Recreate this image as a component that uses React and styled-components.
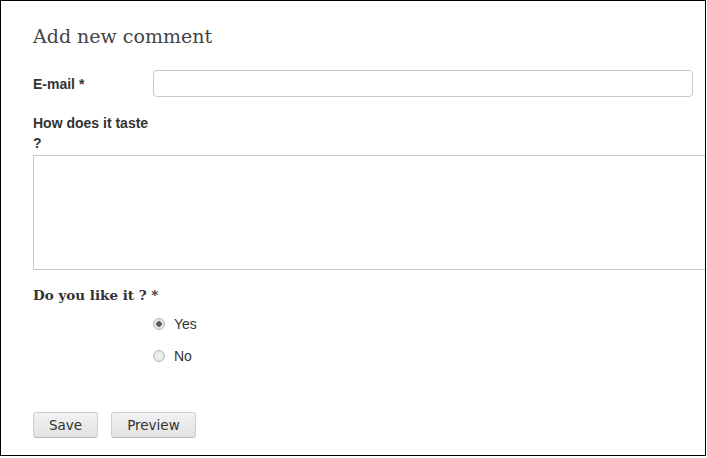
import React from 'react';
import styled, { createGlobalStyle } from 'styled-components';

const GlobalStyle = createGlobalStyle`
  html, body {
    margin: 0;
    padding: 0;
    background: #fff;
  }
`;

const App = () => {
  return (
    <>
      <GlobalStyle />
      <Frame>
        <Heading>Add new comment</Heading>
        <Form onSubmit={(e) => e.preventDefault()}>
          <Row>
            <Label htmlFor="email">E-mail *</Label>
            <TextInput id="email" type="text" />
          </Row>
          <Block>
            <Label htmlFor="taste">How does it taste ?</Label>
            <TextArea id="taste" />
          </Block>
          <Fieldset>
            <Legend>Do you like it ? *</Legend>
            <Options>
              {options.map((opt) => (
                <Option key={opt.value}>
                  <Radio type="radio" name="like" value={opt.value} defaultChecked={opt.checked} />
                  <span>{opt.label}</span>
                </Option>
              ))}
            </Options>
          </Fieldset>
          <Actions>
            <Button type="submit">Save</Button>
            <Button type="button">Preview</Button>
          </Actions>
        </Form>
      </Frame>
    </>
  );
};

export default App;

const Frame = styled.div`
  box-sizing: border-box;
  width: 706px;
  height: 456px;
  border: 1px solid #000;
  padding: 20px 0 0 32px;
  overflow: hidden;
  background: #fff;
`;

const Heading = styled.h2`
  margin: 0 0 19px;
  font-family: "DejaVu Serif", Georgia, serif;
  font-weight: normal;
  font-size: 19px;
  line-height: 30px;
  color: #444;
`;

const Form = styled.form`
  display: flex;
  flex-direction: column;
`;

const Row = styled.div`
  display: flex;
  align-items: center;
`;

const Block = styled.div`
  display: flex;
  flex-direction: column;
  margin-top: 16px;
`;

const Label = styled.label`
  width: 120px;
  flex-shrink: 0;
  font-family: "Liberation Sans", Arial, sans-serif;
  font-weight: bold;
  font-size: 14px;
  line-height: 20px;
  color: #333;
`;

const TextInput = styled.input`
  box-sizing: border-box;
  width: 540px;
  height: 27px;
  margin: 0;
  border: 1px solid #c8c8c8;
  border-radius: 4px;
  background: #fff;
  outline: none;
`;

const TextArea = styled.textarea`
  box-sizing: border-box;
  width: 700px;
  height: 115px;
  margin: 2px 0 0;
  border: 1px solid #c8c8c8;
  border-radius: 0;
  resize: none;
  outline: none;
`;

const Fieldset = styled.fieldset`
  margin: 15px 0 0;
  padding: 0;
  border: none;
`;

const Legend = styled.legend`
  padding: 0;
  font-family: "DejaVu Serif", Georgia, serif;
  font-weight: bold;
  font-size: 13.5px;
  line-height: 20px;
  color: #333;
`;

const Options = styled.div`
  display: flex;
  flex-direction: column;
  gap: 12px;
  margin: 9px 0 0 120px;
`;

const Option = styled.label`
  display: flex;
  align-items: center;
  gap: 9px;
  font-family: "Liberation Sans", Arial, sans-serif;
  font-size: 14px;
  line-height: 20px;
  color: #333;
`;

const Radio = styled.input`
  appearance: none;
  box-sizing: border-box;
  width: 12px;
  height: 12px;
  margin: 0;
  border-radius: 50%;
  border: 1px solid #b8b8b8;
  background: radial-gradient(circle, #f4f4f4 0%, #dcdcdc 100%);

  &:checked {
    background: radial-gradient(circle, #5a5a5a 0 2.5px, #e8e8e8 3px, #d8d8d8 100%);
  }
`;

const Actions = styled.div`
  display: flex;
  gap: 13px;
  margin-top: 46px;
`;

const Button = styled.button`
  box-sizing: border-box;
  height: 26px;
  padding: 0 15px;
  border: 1px solid #cfcfcf;
  border-bottom-color: #b8b8b8;
  border-radius: 3px;
  background: linear-gradient(#f2f2f2, #e2e2e2);
  font-family: "DejaVu Sans", Verdana, sans-serif;
  font-size: 13.5px;
  color: #333;
  cursor: pointer;
`;

const options = [
  { value: 'yes', label: 'Yes', checked: true },
  { value: 'no', label: 'No', checked: false },
];
